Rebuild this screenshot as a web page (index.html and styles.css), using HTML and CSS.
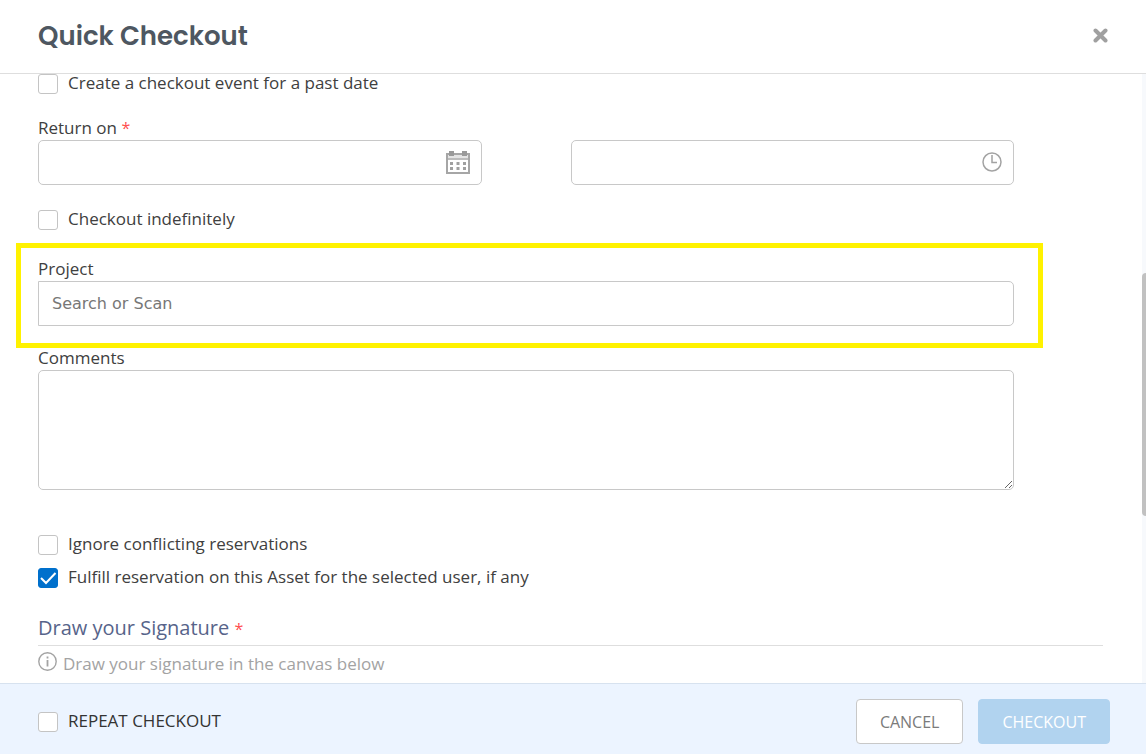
FILE: index.html
```
<!DOCTYPE html>
<html lang="en">
<head>
    <meta charset="UTF-8">
    <meta name="viewport" content="width=device-width, initial-scale=1.0">
    <title>Quick Checkout</title>
    <link rel="stylesheet" href="styles.css">
</head>
<body>
<form class="modal">
    <header class="modal-header">
        <h1 class="modal-title">Quick Checkout</h1>
        <button type="button" class="close-button" aria-label="Close">
            <svg width="16" height="18" viewBox="0 0 16 18"><path d="M3.500 2.500l10 10M13.500 2.500l-10 10" stroke="#a0a0a0" stroke-width="4" stroke-linecap="round"/></svg>
        </button>
    </header>

    <main class="modal-body">
        <label class="check"><input type="checkbox"><span>Create a checkout event for a past date</span></label>

        <div class="row return-row">
            <div class="field half">
                <label for="returnDate">Return on <span class="required">*</span></label>
                <div class="input-wrapper">
                    <input type="text" id="returnDate" class="control">
                    <svg class="icon" width="24" height="24" viewBox="0 0 24 24">
                        <path d="M1 4h22v19H1z" fill="#fff" stroke="#a6a6a6" stroke-width="2"/>
                        <path d="M2 5h20v3H2z" fill="#e4e4e4"/>
                        <path d="M1 9h22" stroke="#a6a6a6" stroke-width="1.500"/>
                        <path d="M3 1h5v5H3zM16 1h5v5h-5z" fill="#999"/>
                        <path d="M4 12h3v3H4zM10.500 12h3v3h-3zM17 12h3v3h-3zM4 17h3v3H4zM10.500 17h3v3h-3zM17 17h3v3h-3z" fill="#a0a0a0"/>
                    </svg>
                </div>
            </div>
            <div class="field half second">
                <div class="input-wrapper">
                    <input type="text" class="control" aria-label="Return time">
                    <svg class="icon clock" width="20" height="20" viewBox="0 0 20 20" fill="none" stroke="#a3a3a3">
                        <circle cx="10" cy="10" r="9" stroke-width="1.500"/>
                        <path d="M10 3v7.500h5" stroke-width="1.500"/>
                    </svg>
                </div>
            </div>
        </div>

        <label class="check indefinite"><input type="checkbox"><span>Checkout indefinitely</span></label>

        <div class="row project-row">
            <div class="field wide highlighted">
                <label for="project">Project</label>
                <input type="text" id="project" class="control search" placeholder="Search or Scan">
            </div>
        </div>

        <div class="row comments-row">
            <div class="field wide">
                <label for="comments">Comments</label>
                <textarea id="comments" class="control"></textarea>
            </div>
        </div>

        <div class="check-list">
            <label class="check"><input type="checkbox"><span>Ignore conflicting reservations</span></label>
            <label class="check"><input type="checkbox" checked><span>Fulfill reservation on this Asset for the selected user, if any</span></label>
        </div>

        <h2 class="section-title">Draw your Signature <span class="required">*</span></h2>
        <p class="hint">
            <svg width="19" height="19" viewBox="0 0 19 19" fill="none" stroke="#a3a3a3">
                <circle cx="9.500" cy="9.500" r="8.700" stroke-width="1.400"/>
                <path d="M9.500 8v6.500M9.500 4.500v2" stroke-width="1.800"/>
            </svg>
            <span>Draw your signature in the canvas below</span>
        </p>
        <div class="scrollbar"><div class="thumb"></div></div>
    </main>

    <footer class="modal-footer">
        <label class="check repeat"><input type="checkbox"><span>REPEAT CHECKOUT</span></label>
        <div class="buttons">
            <button type="button" class="button cancel">CANCEL</button>
            <button type="submit" class="button submit" disabled>CHECKOUT</button>
        </div>
    </footer>
</form>
</body>
</html>
```
FILE: styles.css
```
* {
    box-sizing: border-box;
}
body {
    margin: 0;
    background-color: #fff;
    color: #404040;
    font-family: "Open Sans", "Noto Sans", sans-serif;
    font-size: 17px;
    line-height: 24px;
}
.modal {
    display: flex;
    flex-direction: column;
    height: 100vh;
}
.modal-header {
    display: flex;
    align-items: center;
    justify-content: space-between;
    flex: none;
    padding: 18px 38px;
    border-bottom: 1px solid #dedede;
}
.modal-title {
    margin: 0;
    color: #4e5761;
    font-family: Poppins, Inter, sans-serif;
    font-size: 26px;
    font-weight: 600;
    line-height: 37px;
}
.close-button {
    display: flex;
    padding: 0;
    border: none;
    background: none;
    cursor: pointer;
}
.modal-body {
    position: relative;
    flex: 1;
    min-height: 0;
    padding: 0 43px 0 38px;
}
.row {
    display: grid;
    grid-template-columns: repeat(12, 1fr);
    align-items: end;
}
.field {
    display: flex;
    flex-direction: column;
}
.half {
    grid-column: span 5;
}
.second {
    grid-column: 7 / span 5;
}
.wide {
    grid-column: span 11;
}
.required {
    color: #ff5050;
    font-size: 16px;
}
.control {
    width: 100%;
    height: 45px;
    padding: 0 13px;
    border: 1px solid #c8c8c8;
    border-radius: 5px;
    background-color: #fff;
    color: #404040;
    font-family: inherit;
    font-size: 16px;
}
textarea.control {
    display: block;
    height: 120px;
    padding: 10px 13px;
    resize: vertical;
}
.search {
    border-radius: 0 5px 5px 0;
    font-family: Verdana, "DejaVu Sans", sans-serif;
}
.search::placeholder {
    color: #777;
}
.input-wrapper {
    position: relative;
}
.icon {
    position: absolute;
    top: 10px;
    right: 12px;
}
.clock {
    top: 12px;
}
.check {
    display: flex;
    align-items: flex-start;
    gap: 10px;
    line-height: 18px;
}
.check input {
    appearance: none;
    flex: none;
    width: 20px;
    height: 20px;
    margin: 0;
    border: 1px solid #c4c4c4;
    border-radius: 3px;
    background-color: #fff;
}
.check input:checked {
    border-color: #0070cc;
    background: #0070cc url("data:image/svg+xml,%3Csvg xmlns='http://www.w3.org/2000/svg' viewBox='0 0 20 20'%3E%3Cpath d='M3 10l5 5L17.500 5' fill='none' stroke='white' stroke-width='2'/%3E%3C/svg%3E") center / 20px 20px;
}
.return-row {
    margin-top: 22px;
}
.indefinite {
    margin-top: 25px;
}
.project-row {
    margin-top: 27px;
}
.highlighted {
    position: relative;
}
.highlighted::after {
    content: "";
    position: absolute;
    inset: -14px -29px -22px -22px;
    border: 5px solid #fff200;
    pointer-events: none;
}
.comments-row {
    margin-top: 20px;
}
.check-list {
    display: flex;
    flex-direction: column;
    gap: 13px;
    margin-top: 45px;
}
.section-title {
    margin: 26px 0 0;
    padding-bottom: 2px;
    border-bottom: 1px solid #dedede;
    color: #57648a;
    font-size: 20px;
    font-weight: 400;
    line-height: 28px;
}
.hint {
    display: flex;
    align-items: flex-start;
    gap: 6px;
    margin: 6px 0 0;
    color: #a3a3a3;
}
.scrollbar {
    position: absolute;
    top: 0;
    right: 0;
    bottom: 0;
    width: 4px;
    padding-top: 199px;
    background-color: #f7f9fc;
}
.thumb {
    height: 243px;
    border-radius: 4px 0 0 4px;
    background-color: #c1c1c1;
}
.modal-footer {
    display: flex;
    align-items: center;
    justify-content: space-between;
    flex: none;
    padding: 15px 36px 10px 38px;
    border-top: 1px solid #d7e2ef;
    background-color: #ecf4ff;
}
.repeat {
    color: #333;
}
.buttons {
    display: flex;
    gap: 15px;
}
.button {
    height: 45px;
    padding: 0 23px;
    border: 1px solid #c8c8c8;
    border-radius: 4px;
    background-color: #fff;
    color: #7b7b7b;
    font-family: inherit;
    font-size: 16px;
    cursor: pointer;
}
.submit {
    border-color: #b1d3ef;
    background-color: #b1d3ef;
    color: #fff;
}
```
